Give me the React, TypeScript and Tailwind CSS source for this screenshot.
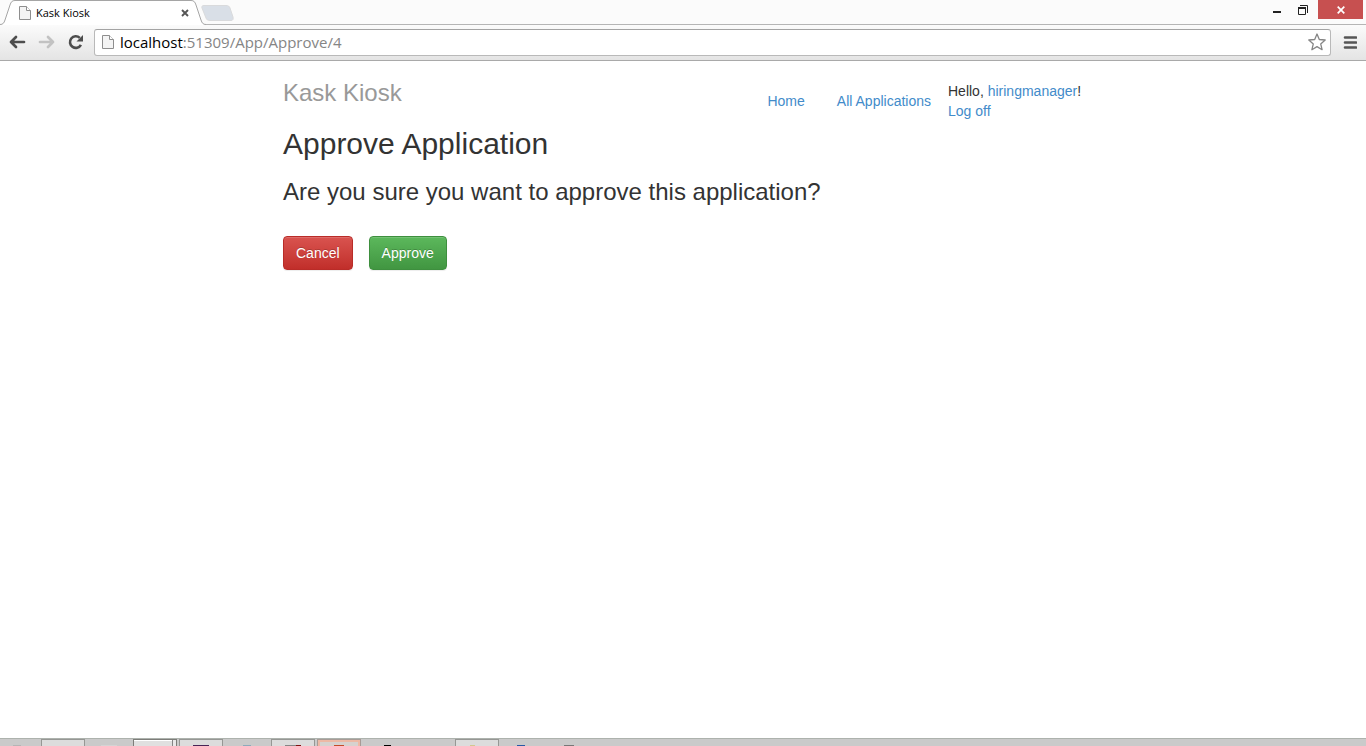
import { useState } from "react";

function PageIcon({ className }: { className: string }) {
  return (
    <svg viewBox="0 0 12 14" className={className} aria-hidden="true">
      <path d="M.5 .5H7.500L11.500 4.500V13.500H.5Z" fill="#f4f4f4" stroke="#8e8e8e" />
      <path d="M7.500 .5V4.500H11.500" fill="#fff" stroke="#8e8e8e" />
    </svg>
  );
}

function TabStrip() {
  return (
    <div className="flex h-6 items-start bg-[#fbfbfb]">
      <div className="relative h-6 w-[206px] shrink-0">
        <svg viewBox="0 0 206 25" className="absolute left-0 top-0 h-[25px] w-[206px]" aria-hidden="true">
          <path
            d="M0 24.5C3 24.5 4 23 5 20L10 5C11 2 12 .5 15 .5H191C194 .5 195 2 196 5L201 20C202 23 203 24.5 206 24.5V25H0Z"
            fill="#fff"
          />
          <path
            d="M0 24.5C3 24.5 4 23 5 20L10 5C11 2 12 .5 15 .5H191C194 .5 195 2 196 5L201 20C202 23 203 24.5 206 24.5"
            fill="none"
            stroke="#a5a5a5"
          />
        </svg>
        <div className="relative flex h-6 items-center gap-1 pl-[19px] pr-[15px] pt-0.5">
          <PageIcon className="h-[14px] w-3 shrink-0" />
          <span className="grow pl-px font-['Open_Sans',sans-serif] text-[11px] leading-4 text-black">Kask Kiosk</span>
          <button type="button" aria-label="Close tab" className="flex size-3 items-center justify-center">
            <svg viewBox="0 0 8 8" className="size-2" aria-hidden="true">
              <path d="M1 1L7 7M7 1L1 7" stroke="#555" strokeWidth="1.9" />
            </svg>
          </button>
        </div>
      </div>
      <button type="button" aria-label="New tab" className="-ml-[5px] mt-[5px] h-4 w-[34px]">
        <svg viewBox="0 0 34 16" className="h-4 w-[34px]" aria-hidden="true">
          <path
            d="M3 .5H25C27.500 .5 28.500 1.500 29 3L32 12C32.500 14 32 15.500 30 15.500H9C6.500 15.500 5.500 14.500 5 13L1 3C.5 1.500 1 .5 3 .5Z"
            fill="#d9dfe7"
            stroke="#d9dadc"
          />
        </svg>
      </button>
      <div className="ml-auto flex pr-[3px]">
        <button type="button" aria-label="Minimize" className="flex h-[19px] w-[26px] items-center justify-center">
          <svg viewBox="0 0 8 11" className="h-[11px] w-2" aria-hidden="true">
            <path d="M0 7H8V9H0Z" fill="#222" />
          </svg>
        </button>
        <button type="button" aria-label="Restore" className="flex h-[19px] w-7 items-center justify-start pl-2">
          <svg viewBox="0 0 10 10" className="size-[10px]" aria-hidden="true">
            <path d="M2 .5H9.500V8M.5 3.500H7.500V9.500H.5Z" fill="none" stroke="#222" />
            <path d="M0 2H8V4H0Z" fill="#222" />
          </svg>
        </button>
        <button type="button" aria-label="Close" className="flex h-[19px] w-[45px] items-center justify-center bg-[#c75050]">
          <svg viewBox="0 0 8 8" className="size-2" aria-hidden="true">
            <path d="M.7 .7L7.300 7.300M7.300 .7L.7 7.300" stroke="#fff" strokeWidth="1.700" />
          </svg>
        </button>
      </div>
    </div>
  );
}

function Toolbar() {
  return (
    <div className="flex h-[37px] items-center border-y border-t-[#b5b5b5] border-b-[#a9a9a9] bg-linear-to-b from-[#fbfbfb] to-[#e4e4e4] pl-2 pr-[9px] pb-px">
      <button type="button" aria-label="Back" className="flex w-[30px] items-center">
        <svg viewBox="0 0 18 14" className="h-[14px] w-[18px]" aria-hidden="true">
          <path d="M8 2L3 7L8 12M3 7H16" fill="none" stroke="#4d4d4d" strokeWidth="2.700" strokeLinecap="round" strokeLinejoin="round" />
        </svg>
      </button>
      <button type="button" aria-label="Forward" className="flex w-[29px] items-center">
        <svg viewBox="0 0 18 14" className="h-[14px] w-[18px]" aria-hidden="true">
          <path d="M10 2L15 7L10 12M15 7H2" fill="none" stroke="#c2c2c2" strokeWidth="2.700" strokeLinecap="round" strokeLinejoin="round" />
        </svg>
      </button>
      <button type="button" aria-label="Reload" className="flex w-[27px] items-center">
        <svg viewBox="0 0 18 16" className="h-4 w-[18px]" aria-hidden="true">
          <path d="M12.800 3.900A5.800 5.800 0 1 0 13.900 10.800" fill="none" stroke="#4d4d4d" strokeWidth="2.600" />
          <path d="M16 1V7.500H9.500Z" fill="#4d4d4d" />
        </svg>
      </button>
      <div className="flex h-[27px] min-w-0 grow items-center rounded-[3px] border border-[#b9b9b9] border-t-[#a3a3a3] bg-white pl-[7px] pr-1">
        <PageIcon className="h-[14px] w-3 shrink-0" />
        <a
          href="#address"
          className="grow pl-1.5 font-['Open_Sans',sans-serif] text-[15px] leading-5 text-[#858585]"
        >
          <span className="text-black">localhost</span>:51309/App/Approve/4
        </a>
        <button type="button" aria-label="Bookmark this page" className="shrink-0">
          <svg viewBox="0 0 18 18" className="size-[18px]" aria-hidden="true">
            <path
              d="M9 1L11.300 6.500L17.200 7L12.700 10.900L14.100 16.700L9 13.600L3.900 16.700L5.300 10.900L.8 7L6.700 6.500Z"
              fill="#fff"
              stroke="#858585"
              strokeWidth="1.300"
              strokeLinejoin="round"
            />
          </svg>
        </button>
      </div>
      <button type="button" aria-label="Menu" className="ml-3 shrink-0">
        <svg viewBox="0 0 14 13" className="h-[13px] w-[14px]" aria-hidden="true">
          <path d="M2 1.500H13M2 6.500H13M2 11.500H13" stroke="#555" strokeWidth="2.600" strokeLinecap="round" />
        </svg>
      </button>
    </div>
  );
}

function SiteHeader() {
  return (
    <header className="flex items-start">
      <h3 className="mt-[19px] text-2xl leading-[26px] text-[#999]">Kask Kiosk</h3>
      <nav className="ml-auto mt-[30px] flex gap-8 text-sm leading-5 text-[#428bca]">
        <a href="#home">Home</a>
        <a href="#applications">All Applications</a>
      </nav>
      <div className="ml-[17px] mt-5 w-[135px] text-sm leading-5">
        <p>
          Hello, <a href="#account" className="text-[#428bca]">hiringmanager</a>!
        </p>
        <a href="#logoff" className="text-[#428bca]">Log off</a>
      </div>
    </header>
  );
}

const actionClass =
  "rounded border px-3 py-1.5 text-sm leading-5 text-white [text-shadow:0_-1px_0_rgba(0,0,0,0.2)] shadow-[inset_0_1px_0_rgba(255,255,255,0.15),0_1px_1px_rgba(0,0,0,0.075)]";

function ApprovePage() {
  const [status, setStatus] = useState("");
  return (
    <div className="mx-auto w-full max-w-[800px] font-['Liberation_Sans',Arial,sans-serif] text-[#333]">
      <SiteHeader />
      <main>
        <h2 className="mt-[7px] text-3xl leading-8">Approve Application</h2>
        <h3 className="mt-[19px] text-2xl leading-[26px]">Are you sure you want to approve this application?</h3>
        <div className="mt-[31px] flex gap-4">
          <button
            type="button"
            onClick={() => setStatus("cancelled")}
            className={`${actionClass} border-[#b92c28] bg-linear-to-b from-[#d9534f] to-[#c12e2a]`}
          >
            Cancel
          </button>
          <button
            type="button"
            onClick={() => setStatus("approved")}
            className={`${actionClass} border-[#3e8f3e] bg-linear-to-b from-[#5cb85c] to-[#419641]`}
          >
            Approve
          </button>
        </div>
        {status && <p className="mt-4 text-sm">{status}</p>}
      </main>
    </div>
  );
}

const slots = [
  { frame: "border-transparent", mark: "w-2 bg-[#b5b5b5]" },
  { frame: "border-[#969794] bg-[#dcdcdc]", mark: "hidden" },
  { frame: "border-transparent", mark: "w-4 bg-[#d4d4d4]" },
  { frame: "border-[#7d7d79] bg-[#e0e0e0] shadow-[inset_-3px_0_0_#e8e8e8,inset_-4px_0_0_#858585,inset_0_1px_0_#fff]", mark: "hidden" },
  { frame: "border-[#969794] bg-[#dcdcdc]", mark: "w-4 bg-[#482456]" },
  { frame: "border-transparent", mark: "w-2 bg-[#8daabb]" },
  { frame: "border-[#969794] bg-[#dcdcdc]", mark: "w-4 bg-linear-to-r from-[#858585] from-70% to-[#801010] to-70%" },
  { frame: "border-[#a79b96] bg-[#d7d2cf] shadow-[inset_0_0_0_2px_#edb9a5]", mark: "w-2.5 bg-[#c44b28]" },
  { frame: "border-transparent", mark: "w-[7px] ml-1 bg-black" },
  { frame: "border-transparent", mark: "hidden" },
  { frame: "border-[#969794] bg-[#dcdcdc]", mark: "w-[5px] mr-2.5 bg-[#d2c88e]" },
  { frame: "border-transparent", mark: "w-2 mr-1 bg-[#2859a5]" },
  { frame: "border-transparent", mark: "w-2.5 bg-[#777]" },
];

function Taskbar() {
  return (
    <footer className="h-2 overflow-hidden border-t border-[#adb2ad] bg-[#cacaca]">
      <div className="-ml-[5px] flex gap-0.5">
        {slots.map((slot, i) => (
          <div key={i} className={`flex h-10 w-11 shrink-0 justify-center border pt-[5px] ${slot.frame}`}>
            <span className={`h-4 ${slot.mark}`} />
          </div>
        ))}
      </div>
    </footer>
  );
}

export default function App() {
  return (
    <div className="flex min-h-screen flex-col bg-white">
      <TabStrip />
      <Toolbar />
      <div className="grow">
        <ApprovePage />
      </div>
      <Taskbar />
    </div>
  );
}
